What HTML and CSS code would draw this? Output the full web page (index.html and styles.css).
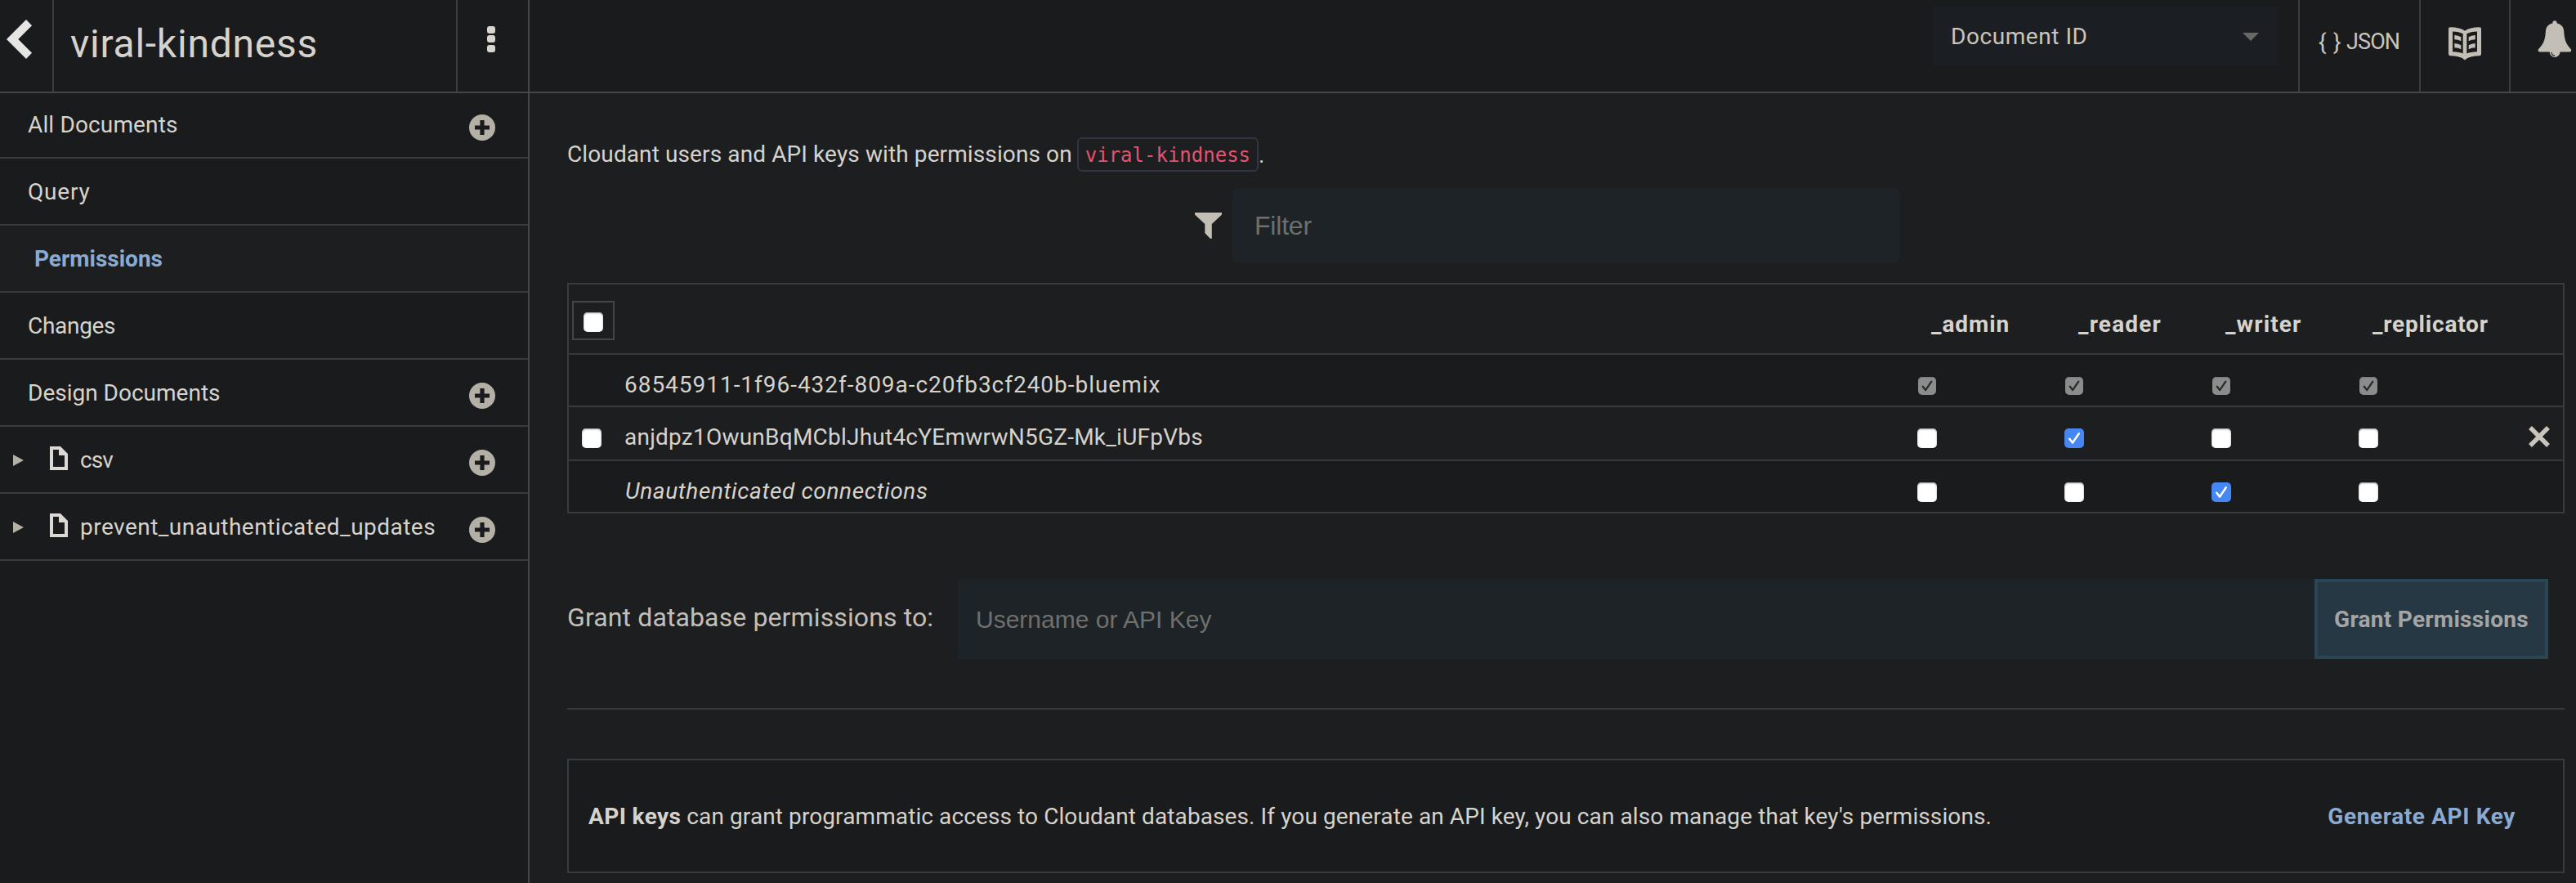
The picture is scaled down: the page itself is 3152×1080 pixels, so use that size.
FILE: index.html
```html
<!DOCTYPE html>
<html lang="en">
<head>
<meta charset="utf-8">
<title>viral-kindness permissions</title>
<link rel="stylesheet" href="styles.css">
</head>
<body>
<svg class="defs" width="0" height="0">
  <symbol id="plus" viewBox="0 0 32 32"><path fill-rule="evenodd" d="M16 0a16 16 0 1 0 0 32a16 16 0 0 0 0-32zM13.4 7h5.2v6.4H25v5.2h-6.4V25h-5.2v-6.4H7v-5.2h6.4z"/></symbol>
  <symbol id="file" viewBox="0 0 22 29"><path fill-rule="evenodd" d="M0 0h13l9 9v20H0zM4 4v21h14V11h-7V4z"/></symbol>
  <symbol id="check" viewBox="0 0 24 24"><path d="M6.3 12.8l3.7 4.8L17.8 6.2" fill="none" stroke="currentColor" stroke-width="2.5" stroke-linecap="round" stroke-linejoin="round"/></symbol>
</svg>
<div class="app">
  <aside class="sidebar">
    <div class="db-header">
      <a class="back"><svg width="31" height="48" viewBox="0 0 31 48"><path d="M24 0l7 7.2L14.3 24L31 40.8L24 48L0 24z"/></svg></a>
      <h1 class="db-name">viral-kindness</h1>
      <div class="kebab"><i></i><i></i><i></i></div>
    </div>
    <nav class="nav">
      <div class="nav-item first"><span class="t-all">All Documents</span><svg class="add"><use href="#plus"/></svg></div>
      <div class="nav-item"><span class="t-query">Query</span></div>
      <div class="nav-item active"><span>Permissions</span></div>
      <div class="nav-item"><span class="t-changes">Changes</span></div>
      <div class="nav-item"><span>Design Documents</span><svg class="add"><use href="#plus"/></svg></div>
      <div class="nav-item doc"><i class="caret"></i><svg class="file"><use href="#file"/></svg><span class="t-csv">csv</span><svg class="add"><use href="#plus"/></svg></div>
      <div class="nav-item doc"><i class="caret"></i><svg class="file"><use href="#file"/></svg><span class="t-prevent">prevent_unauthenticated_updates</span><svg class="add"><use href="#plus"/></svg></div>
    </nav>
  </aside>
  <div class="content">
    <header class="topbar">
      <div class="select"><span>Document ID</span><i class="arrow"></i></div>
      <div class="cell json"><span class="braces">{ }</span><span class="json-label">JSON</span></div>
      <div class="cell book"><svg width="40" height="41" viewBox="0 0 40 41"><path fill-rule="evenodd" d="M2 .3Q14 .5 20 4.7Q26 .5 38 .3Q40 .4 40 2.4V33Q40 35 38 35.2Q27 35.4 22.5 38.6L20 40.6L17.500 38.600Q13 35.400 2 35.200Q0 35 0 33V2.400Q0 .4 2 .3zM5 5.400V30.300Q13 30.500 17.700 32.600V8.200Q13 5.700 5 5.400zM35 5.400Q27 5.700 22.300 8.200V32.600Q27 30.500 35 30.300z"/><path d="M7.300 9.900Q12 10 15.300 12.200V17.300Q12 15.300 7.300 15.200zM7.300 19.900Q12 20 15.300 22.200V27.300Q12 25.300 7.300 25.200zM32.700 9.900Q28 10 24.700 12.200V17.300Q28 15.300 32.700 15.200zM32.700 19.900Q28 20 24.700 22.200V27.300Q28 25.300 32.700 25.200z"/></svg></div>
      <div class="cell bell"><svg width="42" height="46" viewBox="0 0 42 46"><path d="M21 .3c1.600 0 2.700 1.200 2.700 3.200C29 4.500 31.800 8 32.200 13C32.800 24 35 29 41 35.500q1 2.600-2 3H27.500a6.400 6.400 0 0 1-12.800 0H2.800Q0 38 .8 35.500C7 29 9.400 24 9.900 13C10.400 8 13 4.500 18.300 3.500C18.300 1.500 19.400 .3 21 .3z"/><path class="clap" d="M16.800 39q.6 3.600 4.400 4.300"/></svg></div>
    </header>
    <main class="main">
      <p class="intro"><span>Cloudant users and API keys with permissions on</span><code>viral-kindness</code>.</p>
      <div class="filter"><svg width="33" height="32" viewBox="0 0 33 32"><path d="M0 0h33v2.500L20.800 14V32L18.500 31.500L12.300 25V14L0 2.500z"/></svg><div class="field">Filter</div></div>
      <div class="table">
        <div class="row head">
          <div class="all"><b class="cb"></b></div><span></span>
          <span class="h-admin">_admin</span><span class="h-reader">_reader</span><span class="h-writer">_writer</span><span class="h-repl">_replicator</span>
        </div>
        <div class="row odd r1">
          <span></span><span class="n-one">68545911-1f96-432f-809a-c20fb3cf240b-bluemix</span>
          <b class="cb off"><svg><use href="#check"/></svg></b><b class="cb off"><svg><use href="#check"/></svg></b><b class="cb off"><svg><use href="#check"/></svg></b><b class="cb off"><svg><use href="#check"/></svg></b>
        </div>
        <div class="row r2">
          <b class="cb pick"></b><span class="n-two">anjdpz1OwunBqMCblJhut4cYEmwrwN5GZ-Mk_iUFpVbs</span>
          <b class="cb"></b><b class="cb on"><svg><use href="#check"/></svg></b><b class="cb"></b><b class="cb"></b>
          <svg class="del" viewBox="0 0 26 26"><path d="M2 2L24 24M24 2L2 24"/></svg>
        </div>
        <div class="row odd r3">
          <span></span><em class="n-three">Unauthenticated connections</em>
          <b class="cb"></b><b class="cb"></b><b class="cb on"><svg><use href="#check"/></svg></b><b class="cb"></b>
        </div>
      </div>
      <div class="grant">
        <label>Grant database permissions to:</label>
        <div class="user">Username or API Key</div>
        <div class="button">Grant Permissions</div>
      </div>
      <hr>
      <section class="keys">
        <strong>API keys</strong><span class="keys-text">can grant programmatic access to Cloudant databases. If you generate an API key, you can also manage that key's permissions.</span>
        <a class="generate">Generate API Key</a>
      </section>
    </main>
  </div>
</div>
</body>
</html>
```
FILE: styles.css
```css
* { box-sizing: border-box; }
body {
  margin: 0;
  background: #1d1e20;
  color: #d6d2cc;
  font: 28px/33px Roboto, sans-serif;
  overflow: hidden;
}
svg { display: block; flex: none; }
.defs { position: absolute; }
.app { display: flex; width: 3152px; height: 1080px; }

/* Sidebar */
.sidebar { width: 648px; flex: none; background: #1a1b1d; border-right: 2px solid #464648; }
.db-header { display: flex; height: 114px; border-bottom: 2px solid #464648; }
.back { width: 66px; border-right: 2px solid #3b3c3e; padding: 24px 0 0 8px; fill: #e8e6e3; }
.db-name { flex: 1; margin: 0; padding: 26px 0 0 20px; font-size: 48px; line-height: 56px; font-weight: 400; letter-spacing: .76px; }
.kebab { width: 88px; border-left: 2px solid #3b3c3e; padding: 32px 0 0 36px; display: flex; flex-direction: column; gap: 2.3px; }
.kebab i { width: 9.5px; height: 9px; border-radius: 3px; background: #d8d4cf; }
.nav-item { height: 82px; display: flex; align-items: center; border-bottom: 2px solid #363c41; padding: 0 40px 0 34px; }
.nav-item span { white-space: nowrap; }
.nav-item.first { height: 80px; }
.nav-item.active { background: #1c1e1f; color: #88aad3; font-weight: 700; padding-left: 42px; }
.nav-item.doc { padding-left: 16px; }
.add { width: 32px; height: 32px; margin: 0 0 0 auto; fill: #b5b0a6; transform: translateY(4px); }
.first .add { transform: translateY(3px); }
.caret { border-left: 13px solid #b5b0a6; border-top: 7.5px solid transparent; border-bottom: 7.5px solid transparent; margin: 1px 32px 0 0; }
.file { width: 22px; height: 29px; fill: #dcd8d3; margin: -3px 15px 0 0; }
.t-all { letter-spacing: .14px; margin-bottom: 2px; }
.t-query { letter-spacing: .8px; }
.t-changes { letter-spacing: -.3px; }
.t-csv { letter-spacing: -.9px; }
.t-prevent { letter-spacing: .47px; }

/* Top bar */
.content { flex: 1; min-width: 0; }
.topbar { height: 114px; display: flex; justify-content: flex-end; background: #1a1b1d; border-bottom: 2px solid #464648; fill: #c4bfb6; }
.select { width: 420px; height: 72px; margin: 8px 26px 0 0; padding: 0 22px 0 21px; display: flex; align-items: center; justify-content: space-between; background: #1b1f24; color: #c9c5bc; letter-spacing: .56px; }
.arrow { border-top: 10px solid #686867; border-left: 10px solid transparent; border-right: 10px solid transparent; margin-top: 2px; }
.cell { border-left: 2px solid #3b3c3e; flex: none; }
.json { width: 148px; padding: 35px 0 0 23px; display: flex; color: #c9c5bc; }
.braces { width: 34px; letter-spacing: .8px; }
.json-label { font-size: 27px; letter-spacing: -.9px; }
.book { width: 110px; padding: 33px 0 0 34px; }
.bell { width: 82px; padding: 25px 0 0 33px; }
.clap { fill: none; stroke: #1a1b1d; stroke-width: 1.2px; }

/* Permissions panel */
.main { padding: 54px 14px 0 46px; }
.intro { margin: 0; height: 42px; display: flex; align-items: center; letter-spacing: .11px; }
.intro span { margin-bottom: 1px; }
code { height: 42px; margin: 0 0 0 6px; padding: 0 8px; border: 2px solid #333343; border-radius: 6px; color: #e4536f; font: 24px/40px "DejaVu Sans Mono", monospace; letter-spacing: 0; }
.filter { display: flex; align-items: center; gap: 13px; height: 92px; margin-top: 20px; padding-left: 768px; fill: #c4bfb6; }
.field { width: 817px; height: 92px; padding-left: 27px; border-radius: 8px; background: #1e2327; color: #6f706c; font: 32px/92px "Liberation Sans", sans-serif; letter-spacing: -.2px; }
.table { margin-top: 24px; border: 2px solid #363d42; }
.row { display: grid; grid-template-columns: 68px 1fr repeat(4, 180px) 70px; align-items: start; padding-top: 20px; border-bottom: 2px solid #38393b; }
.odd { background: #1a1b1d; }
.head { height: 86px; font-weight: 700; }
.head span { padding: 12px 0 0 17px; }
.r1 { height: 64px; }
.r2 { height: 66px; }
.r3 { height: 62px; border-bottom: 0; }
.cb { display: block; width: 24px; height: 24px; margin-top: 6px; border-radius: 5px; background: #fff; box-shadow: inset 0 1px 2px #8e8e8e; }
.cb svg { width: 24px; height: 24px; color: #fff; }
.cb.on { background: #4787f3; box-shadow: none; }
.cb.off { width: 22px; height: 22px; margin: 7px 0 0 1px; background: #8b8d8d; box-shadow: inset 0 1px 1px #76787a; }
.cb.off svg { width: 22px; height: 22px; color: #292a2c; }
.cb.pick { margin-left: 16px; }
.all { width: 52px; height: 48px; margin-left: 4px; padding: 12px; border: 2px solid #444546; }
.all .cb { margin: 0; }
.del { width: 26px; height: 26px; margin: 3px 0 0 28px; fill: none; stroke: #c9c5bc; stroke-width: 5.5px; }
.h-admin { letter-spacing: .95px; }
.h-reader { letter-spacing: 1.19px; }
.h-writer { letter-spacing: 1.12px; }
.h-repl { letter-spacing: .81px; }
.n-one { letter-spacing: .97px; }
.n-two { letter-spacing: .23px; }
.n-three { letter-spacing: .62px; padding-left: 1px; }

/* Grant form */
.grant { display: flex; height: 98px; margin-top: 80px; }
.grant label { width: 478px; font-size: 32px; line-height: 94px; letter-spacing: .12px; color: #c4bfb6; }
.user { width: 1660px; padding-left: 22px; background: #1e2327; color: #6f706c; font: 30px/100px "Liberation Sans", sans-serif; }
.button { width: 286px; border: 4px solid #2a4655; background: #263843; color: #a5a5a4; font-weight: 700; line-height: 92px; padding-left: 20px; letter-spacing: .29px; }
hr { height: 2px; margin: 60px 0; border: 0; background: #38393b; }
.keys { height: 140px; display: flex; align-items: center; padding: 0 58px 0 24px; border: 2px solid #363d42; background: #1a1b1d; white-space: nowrap; }
.keys strong { letter-spacing: .4px; }
.keys-text { margin-left: 7px; letter-spacing: .1px; }
.generate { margin-left: auto; color: #88aad3; font-weight: 700; letter-spacing: .62px; }
```
